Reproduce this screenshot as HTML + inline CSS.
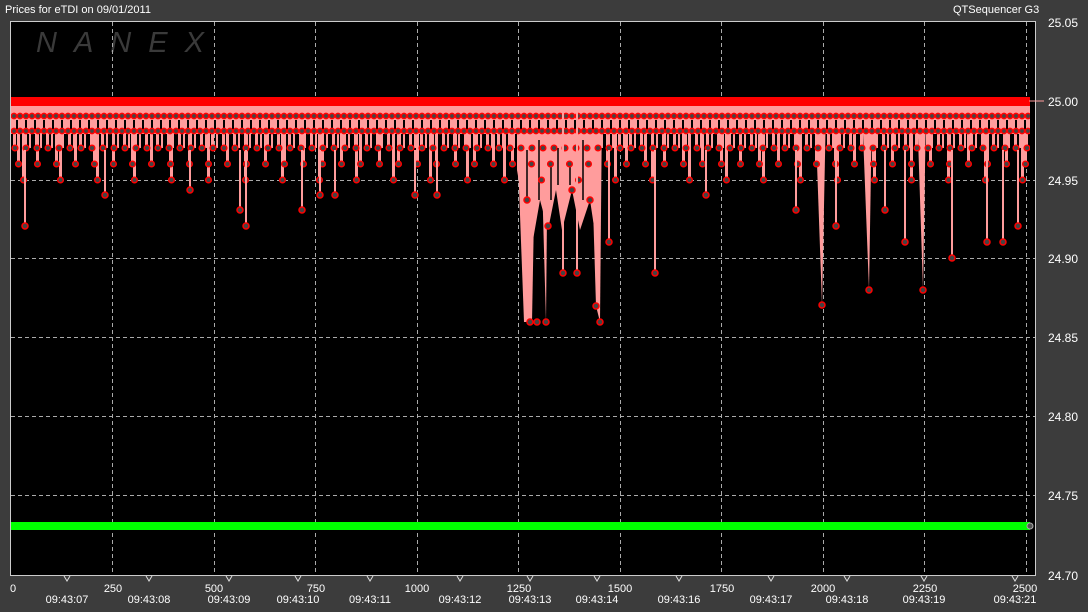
<!DOCTYPE html>
<html><head><style>
body{margin:0;width:1088px;height:607px;background:#3c3c3c;overflow:hidden;font-family:"Liberation Sans",sans-serif;color:#fff;}
</style></head><body>
<svg width="1088" height="607" xmlns="http://www.w3.org/2000/svg" font-family="Liberation Sans, sans-serif" font-size="11" fill="#fff">
<defs>
<pattern id="gaps" x="11" y="0" width="9" height="10" patternUnits="userSpaceOnUse"><rect x="5" y="0" width="2" height="10" fill="#000"/></pattern>
<pattern id="dots" x="11" y="0" width="6" height="600" patternUnits="userSpaceOnUse">
<circle cx="3" cy="116" r="2.6" fill="#444" stroke="#f00" stroke-width="1.5"/>
<circle cx="3" cy="131" r="2.6" fill="#444" stroke="#f00" stroke-width="1.5"/>
</pattern>
<pattern id="pa" x="11" y="0" width="11" height="600" patternUnits="userSpaceOnUse">
<rect x="2" y="130" width="3" height="18" fill="#ff9c9c"/><rect x="7" y="130" width="2" height="18" fill="#ff9c9c"/>
<circle cx="4" cy="148" r="2.8" fill="#444" stroke="#f00" stroke-width="1.5"/>
</pattern>
<pattern id="pb" x="15" y="0" width="19" height="600" patternUnits="userSpaceOnUse">
<rect x="2" y="130" width="3" height="34" fill="#ff9c9c"/>
<circle cx="3.5" cy="164" r="2.8" fill="#444" stroke="#f00" stroke-width="1.5"/>
</pattern>
<pattern id="pc" x="20" y="0" width="37" height="600" patternUnits="userSpaceOnUse">
<rect x="2" y="130" width="3" height="50" fill="#ff9c9c"/>
<circle cx="3.5" cy="180" r="2.8" fill="#444" stroke="#f00" stroke-width="1.5"/>
</pattern>
</defs>
<text x="5" y="13">Prices for  eTDI  on  09/01/2011</text>
<text x="953" y="13">QTSequencer G3</text>
<rect x="10.5" y="21.5" width="1025" height="554" fill="#000" stroke="#ccc"/>
<text x="36" y="52" font-size="29" font-style="italic" fill="#3a3a3a" letter-spacing="17">NANEX</text>
<g stroke="#aaa" stroke-dasharray="4,3" stroke-width="1">
<line x1="11" y1="180.5" x2="1035" y2="180.5"/><line x1="11" y1="258.5" x2="1035" y2="258.5"/>
<line x1="11" y1="337.5" x2="1035" y2="337.5"/><line x1="11" y1="416.5" x2="1035" y2="416.5"/>
<line x1="11" y1="495.5" x2="1035" y2="495.5"/>
<line x1="112.5" y1="22" x2="112.5" y2="575"/><line x1="214.5" y1="22" x2="214.5" y2="575"/>
<line x1="315.5" y1="22" x2="315.5" y2="575"/><line x1="417.5" y1="22" x2="417.5" y2="575"/>
<line x1="518.5" y1="22" x2="518.5" y2="575"/><line x1="620.5" y1="22" x2="620.5" y2="575"/>
<line x1="721.5" y1="22" x2="721.5" y2="575"/><line x1="823.5" y1="22" x2="823.5" y2="575"/>
<line x1="924.5" y1="22" x2="924.5" y2="575"/><line x1="1026.5" y1="22" x2="1026.5" y2="575"/>
</g>
<g fill="#ff9c9c">
<polygon points="517,106 601,106 601,200 596,240 590,200 580,230 572,190 562,230 556,190 548,230 540,200 533,240 522,200 517,170"/>
<polygon points="516,107 536,107 532,322 524,322"/>
<polygon points="540,107 548,107 546,322"/>
<polygon points="590,107 602,107 600,322 596,306"/>
<polygon points="815,107 826,107 822,305"/>
<polygon points="917,107 926,107 923,290"/>
<polygon points="862,107 872,107 869,290"/>
</g>
<g stroke="#000" stroke-width="1.5">
<line x1="527" y1="150" x2="527" y2="200"/><line x1="539" y1="140" x2="539" y2="200"/>
<line x1="551" y1="150" x2="551" y2="200"/><line x1="558" y1="140" x2="558" y2="185"/>
<line x1="570" y1="150" x2="570" y2="185"/><line x1="583" y1="140" x2="583" y2="200"/>
</g>
<rect x="11" y="97" width="1019" height="9" fill="#ff0000"/>
<rect x="11" y="106" width="1019" height="28" fill="#ff9c9c"/>
<rect x="11" y="120" width="1019" height="10" fill="url(#gaps)"/>
<rect x="11" y="100" width="1019" height="100" fill="url(#pc)"/>
<rect x="11" y="100" width="1019" height="100" fill="url(#pb)"/>
<rect x="11" y="100" width="1019" height="100" fill="url(#pa)"/>
<rect x="11" y="110" width="1019" height="25" fill="url(#dots)"/>
<g stroke="#ff9c9c" stroke-width="2">
<line x1="25" y1="150" x2="25" y2="226"/><line x1="105" y1="150" x2="105" y2="195"/>
<line x1="190" y1="150" x2="190" y2="190"/><line x1="240" y1="150" x2="240" y2="210"/>
<line x1="246" y1="150" x2="246" y2="226"/><line x1="302" y1="150" x2="302" y2="210"/>
<line x1="320" y1="150" x2="320" y2="195"/><line x1="335" y1="150" x2="335" y2="195"/>
<line x1="415" y1="150" x2="415" y2="195"/><line x1="437" y1="150" x2="437" y2="195"/>
<line x1="563" y1="107" x2="563" y2="273"/><line x1="577" y1="107" x2="577" y2="273"/>
<line x1="609" y1="150" x2="609" y2="242"/><line x1="655" y1="150" x2="655" y2="273"/>
<line x1="706" y1="150" x2="706" y2="195"/><line x1="796" y1="150" x2="796" y2="210"/>
<line x1="836" y1="150" x2="836" y2="226"/><line x1="885" y1="150" x2="885" y2="210"/>
<line x1="905" y1="150" x2="905" y2="242"/><line x1="952" y1="150" x2="952" y2="258"/>
<line x1="987" y1="150" x2="987" y2="242"/><line x1="1003" y1="150" x2="1003" y2="242"/>
<line x1="1018" y1="150" x2="1018" y2="226"/>
</g>
<g fill="#444" stroke="#f00" stroke-width="1.5">
<circle cx="25" cy="226" r="3"/><circle cx="105" cy="195" r="3"/><circle cx="190" cy="190" r="3"/>
<circle cx="240" cy="210" r="3"/><circle cx="246" cy="226" r="3"/><circle cx="302" cy="210" r="3"/>
<circle cx="320" cy="195" r="3"/><circle cx="335" cy="195" r="3"/><circle cx="415" cy="195" r="3"/>
<circle cx="437" cy="195" r="3"/><circle cx="530" cy="322" r="3"/><circle cx="537" cy="322" r="3"/>
<circle cx="546" cy="322" r="3"/><circle cx="563" cy="273" r="3"/><circle cx="577" cy="273" r="3"/>
<circle cx="596" cy="306" r="3"/><circle cx="600" cy="322" r="3"/><circle cx="609" cy="242" r="3"/>
<circle cx="655" cy="273" r="3"/><circle cx="706" cy="195" r="3"/><circle cx="796" cy="210" r="3"/>
<circle cx="822" cy="305" r="3"/><circle cx="836" cy="226" r="3"/><circle cx="869" cy="290" r="3"/>
<circle cx="885" cy="210" r="3"/><circle cx="905" cy="242" r="3"/><circle cx="923" cy="290" r="3"/>
<circle cx="952" cy="258" r="3"/><circle cx="987" cy="242" r="3"/><circle cx="1003" cy="242" r="3"/>
<circle cx="1018" cy="226" r="3"/>
<circle cx="527" cy="200" r="3"/><circle cx="548" cy="226" r="3"/><circle cx="572" cy="190" r="3"/>
<circle cx="590" cy="200" r="3"/>
</g>
<line x1="1029" y1="101" x2="1044" y2="101" stroke="#ff9c9c"/>
<rect x="11" y="522" width="1019" height="8" fill="#00ff00"/>
<circle cx="1030" cy="526" r="3" fill="#555" stroke="#aaa"/>
<g font-size="12">
<text x="1048" y="27">25.05</text><text x="1048" y="106">25.00</text><text x="1048" y="185">24.95</text>
<text x="1048" y="263">24.90</text><text x="1048" y="342">24.85</text><text x="1048" y="421">24.80</text>
<text x="1048" y="500">24.75</text><text x="1048" y="580">24.70</text>
</g>
<g text-anchor="middle">
<text x="13" y="592">0</text><text x="113" y="592">250</text><text x="214" y="592">500</text>
<text x="316" y="592">750</text><text x="417" y="592">1000</text><text x="519" y="592">1250</text>
<text x="620" y="592">1500</text><text x="722" y="592">1750</text><text x="823" y="592">2000</text>
<text x="925" y="592">2250</text><text x="1025" y="592">2500</text>
<text x="67" y="603">09:43:07</text><text x="149" y="603">09:43:08</text><text x="229" y="603">09:43:09</text>
<text x="298" y="603">09:43:10</text><text x="370" y="603">09:43:11</text><text x="460" y="603">09:43:12</text>
<text x="530" y="603">09:43:13</text><text x="597" y="603">09:43:14</text><text x="679" y="603">09:43:16</text>
<text x="771" y="603">09:43:17</text><text x="847" y="603">09:43:18</text><text x="924" y="603">09:43:19</text>
<text x="1015" y="603">09:43:21</text>
</g>
<g fill="none" stroke="#ddd">
<path d="M64,576 L67,581 L70,576"/><path d="M146,576 L149,581 L152,576"/><path d="M226,576 L229,581 L232,576"/>
<path d="M295,576 L298,581 L301,576"/><path d="M367,576 L370,581 L373,576"/><path d="M457,576 L460,581 L463,576"/>
<path d="M527,576 L530,581 L533,576"/><path d="M594,576 L597,581 L600,576"/><path d="M676,576 L679,581 L682,576"/>
<path d="M768,576 L771,581 L774,576"/><path d="M844,576 L847,581 L850,576"/><path d="M921,576 L924,581 L927,576"/>
<path d="M1012,576 L1015,581 L1018,576"/>
</g>
</svg>
</body></html>
